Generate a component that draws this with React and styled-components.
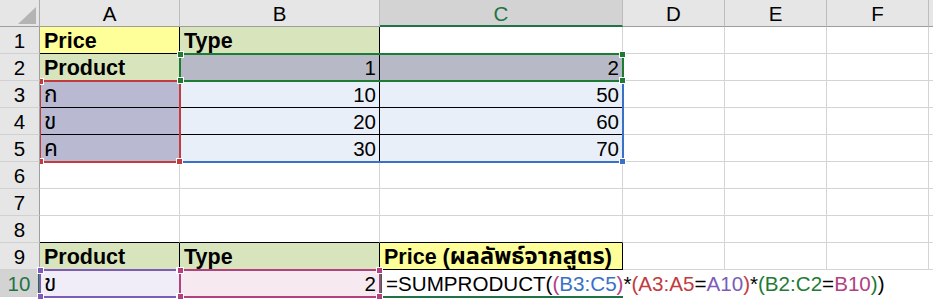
import React from "react";
import styled, { createGlobalStyle } from "styled-components";

const FONT = `"Liberation Sans", "Noto Sans Thai", "Tahoma", "DejaVu Sans", sans-serif`;

const GlobalStyle = createGlobalStyle`
  body {
    margin: 0;
    background: #fff;
  }
`;

const YELLOW = "#ffff99";
const OLIVE = "#d8e4bc";
const GREEN = "#217346";

const RANGE = {
  blue: "#3a70c6",
  red: "#c23b3f",
  green: "#1e7b34",
  purple: "#7d5cb8",
  pink: "#b2417f",
};

const Sheet = styled.div`
  display: grid;
  grid-template-columns: 40px 140px 200px 243px 102px 102px 102px 1fr;
  grid-template-rows: repeat(11, 27px);
  width: 933px;
  height: 299px;
  overflow: hidden;
  font-family: ${FONT};
  font-size: 20.5px;
  color: #000;
  background: #fff;
`;

const Corner = styled.div`
  grid-column: 1;
  grid-row: 1;
  background: #e6e6e6;
  border-right: 1px solid #ababab;
  border-bottom: 1px solid #9e9e9e;
  box-sizing: border-box;
  position: relative;
  z-index: 5;
  svg {
    display: block;
  }
`;

const ColHeader = styled.div`
  grid-column: ${(p) => p.$col};
  grid-row: 1;
  box-sizing: border-box;
  background: ${(p) => (p.$selected ? "#d3d3d3" : "#e6e6e6")};
  color: ${(p) => (p.$selected ? GREEN : "#000")};
  border-right: 1px solid #bcbcbc;
  border-bottom: ${(p) => (p.$selected ? `2px solid ${GREEN}` : "1px solid #9e9e9e")};
  text-align: center;
  line-height: 28px;
  font-size: 20.5px;
  position: relative;
  z-index: 5;
`;

const RowHeader = styled.div`
  grid-column: 1;
  grid-row: ${(p) => p.$row};
  box-sizing: border-box;
  background: ${(p) => (p.$selected ? "#d3d3d3" : "#e6e6e6")};
  color: ${(p) => (p.$selected ? GREEN : "#000")};
  border-bottom: 1px solid #d0d0d0;
  border-right: ${(p) => (p.$selected ? `2px solid ${GREEN}` : "1px solid #9e9e9e")};
  text-align: center;
  padding-top: 1px;
  line-height: 26px;
  font-size: 20.5px;
  position: relative;
  z-index: 5;
`;

const Cell = styled.div`
  grid-column: ${(p) => p.$col};
  grid-row: ${(p) => p.$row};
  box-sizing: border-box;
  background: ${(p) => p.$bg || "#fff"};
  border-right: 1px solid ${(p) => (p.$rb ? "#000" : "#d4d4d4")};
  border-bottom: 1px solid ${(p) => (p.$bb ? "#000" : "#d4d4d4")};
  padding: 1px 3px 0 4px;
  line-height: 26px;
  font-weight: ${(p) => (p.$bold ? 700 : 400)};
  font-size: ${(p) => (p.$bold ? "21.5px" : "inherit")};
  text-align: ${(p) => p.$align || "left"};
  white-space: nowrap;
  overflow: hidden;
`;

const Thai = styled.span`
  font-size: 1.1em;
  line-height: 0;
`;

const EditCell = styled.div`
  grid-column: 4 / -1;
  grid-row: 11;
  box-sizing: border-box;
  background: #fff;
  border-left: 2px solid ${GREEN};
  padding: 1px 0 0 4px;
  line-height: 26px;
  font-size: 20.6px;
  white-space: nowrap;
  position: relative;
  z-index: 3;

  &::after {
    content: "";
    position: absolute;
    left: -2px;
    bottom: -1px;
    width: 243px;
    height: 2px;
    background: ${GREEN};
  }
`;

const Ref = styled.span`
  color: ${(p) => p.$color || "#000"};
`;

const Range = styled.div`
  grid-column: ${(p) => p.$cols};
  grid-row: ${(p) => p.$rows};
  margin: -1px;
  box-sizing: border-box;
  border: 2px solid ${(p) => p.$color};
  position: relative;
  z-index: ${(p) => p.$z};
  pointer-events: none;
`;

const Handle = styled.span`
  position: absolute;
  width: 7px;
  height: 7px;
  box-sizing: border-box;
  background: ${(p) => p.$color};
  border: 1px solid #fff;
  ${(p) => p.$v}: -4px;
  ${(p) => p.$h}: -4px;
`;

const COLS = ["A", "B", "C", "D", "E", "F", "X"];

const DATA = {
  1: {
    A: { v: "Price", bold: true, bg: YELLOW, rb: true, bb: true },
    B: { v: "Type", bold: true, bg: OLIVE, rb: true, bb: true },
  },
  2: {
    A: { v: "Product", bold: true, bg: OLIVE, rb: true, bb: true },
    B: { v: "1", align: "right", bg: "#b8b9c6", rb: true },
    C: { v: "2", align: "right", bg: "#b8b9c6" },
  },
  3: {
    A: { v: <Thai>ก</Thai>, bg: "#b9bad2", rb: true, bb: true },
    B: { v: "10", align: "right", bg: "#e9eff8", rb: true, bb: true },
    C: { v: "50", align: "right", bg: "#e9eff8", bb: true },
  },
  4: {
    A: { v: <Thai>ข</Thai>, bg: "#b9bad2", rb: true, bb: true },
    B: { v: "20", align: "right", bg: "#e9eff8", rb: true, bb: true },
    C: { v: "60", align: "right", bg: "#e9eff8", bb: true },
  },
  5: {
    A: { v: <Thai>ค</Thai>, bg: "#b9bad2", rb: true },
    B: { v: "30", align: "right", bg: "#e9eff8", rb: true },
    C: { v: "70", align: "right", bg: "#e9eff8" },
  },
  8: {
    A: { bb: true },
    B: { bb: true },
    C: { bb: true },
  },
  9: {
    A: { v: "Product", bold: true, bg: OLIVE, rb: true, bb: true },
    B: { v: "Type", bold: true, bg: OLIVE, rb: true, bb: true },
    C: {
      v: (
        <>
          Price (<Thai>ผลลัพธ์จากสูตร</Thai>)
        </>
      ),
      bold: true,
      bg: YELLOW,
      rb: true,
      bb: true,
    },
  },
  10: {
    A: { v: <Thai>ข</Thai>, bg: "#f1edf8" },
    B: { v: "2", align: "right", bg: "#f6e9f0" },
  },
};

const RANGES = [
  { cols: "3 / 5", rows: "4 / 7", color: RANGE.blue, handles: ["bottom-right"] },
  { cols: "2 / 3", rows: "4 / 7", color: RANGE.red, handles: ["top-left", "bottom-left", "bottom-right"] },
  { cols: "3 / 5", rows: "3 / 4", color: RANGE.green, handles: ["top-left", "top-right", "bottom-left", "bottom-right"] },
  { cols: "2 / 3", rows: "11 / 12", color: RANGE.purple, handles: ["top-left", "top-right", "bottom-left", "bottom-right"] },
  { cols: "3 / 4", rows: "11 / 12", color: RANGE.pink, handles: ["top-left", "top-right", "bottom-left", "bottom-right"] },
];

const App = () => {
  const rows = [1, 2, 3, 4, 5, 6, 7, 8, 9, 10];

  return (
    <>
      <GlobalStyle />
      <Sheet>
        <Corner>
          <svg width="40" height="27" viewBox="0 0 40 27">
            <polygon points="18,24 36,24 36,7" fill="#b4b4b4" />
          </svg>
        </Corner>
        {COLS.map((c, i) => (
          <ColHeader key={c} $col={i + 2} $selected={c === "C"}>
            {c === "X" ? "" : c}
          </ColHeader>
        ))}

        {rows.map((r) => (
          <React.Fragment key={r}>
            <RowHeader $row={r + 1} $selected={r === 10}>
              {r}
            </RowHeader>
            {COLS.map((c, i) => {
              if (r === 10 && i >= 2) return null;
              const d = (DATA[r] && DATA[r][c]) || {};
              return (
                <Cell
                  key={c}
                  $col={i + 2}
                  $row={r + 1}
                  $bg={d.bg}
                  $bold={d.bold}
                  $align={d.align}
                  $rb={d.rb}
                  $bb={d.bb}
                >
                  {d.v}
                </Cell>
              );
            })}
          </React.Fragment>
        ))}

        <EditCell>
          <Ref>=SUMPRODUCT(</Ref>
          <Ref $color="#b2417f">(</Ref>
          <Ref $color={RANGE.blue}>B3:C5</Ref>
          <Ref $color="#b2417f">)</Ref>
          <Ref>*</Ref>
          <Ref $color={RANGE.red}>(A3:A5</Ref>
          <Ref>=</Ref>
          <Ref $color={RANGE.purple}>A10</Ref>
          <Ref $color={RANGE.red}>)</Ref>
          <Ref>*</Ref>
          <Ref $color={RANGE.green}>(B2:C2</Ref>
          <Ref>=</Ref>
          <Ref $color={RANGE.pink}>B10</Ref>
          <Ref $color={RANGE.green}>)</Ref>
          <Ref>)</Ref>
        </EditCell>

        {RANGES.map((rg, i) => (
          <Range key={i} $cols={rg.cols} $rows={rg.rows} $color={rg.color} $z={2 + i}>
            {rg.handles.map((h) => {
              const [v, hz] = h.split("-");
              return <Handle key={h} $v={v} $h={hz} $color={rg.color} />;
            })}
          </Range>
        ))}
      </Sheet>
    </>
  );
};

export default App;
